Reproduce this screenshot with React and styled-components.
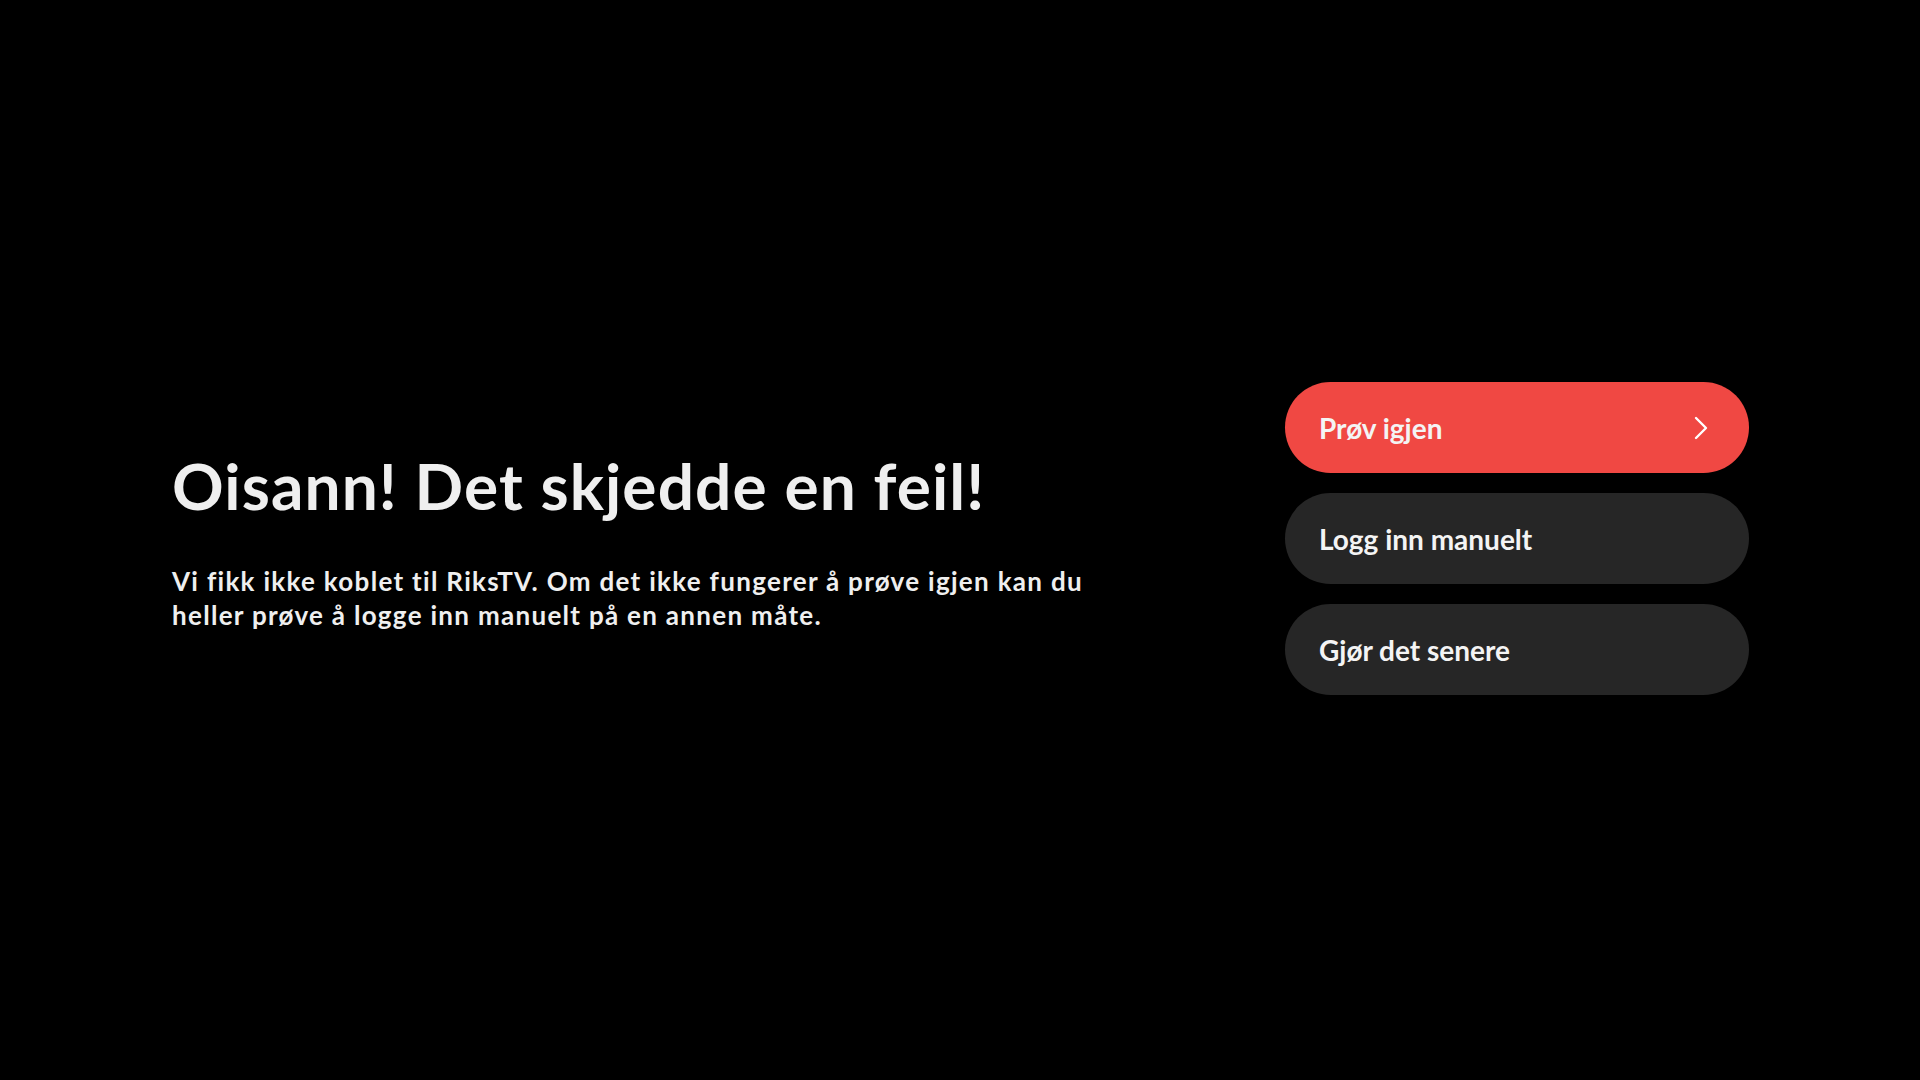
import React from 'react';
import styled, { createGlobalStyle } from 'styled-components';

const GlobalStyle = createGlobalStyle`
  html, body {
    margin: 0;
    padding: 0;
    background: #000;
  }
  body {
    font-family: Lato, "Noto Sans", sans-serif;
    color: #efefef;
  }
`;

const Screen = styled.main`
  width: 100vw;
  height: 100vh;
  box-sizing: border-box;
  padding: 0 171px 0 172px;
  display: flex;
  align-items: center;
  justify-content: space-between;
  background: #000;
`;

const TextColumn = styled.section`
  display: flex;
  flex-direction: column;
  gap: 40px;
`;

const Title = styled.h1`
  margin: 0;
  font-size: 64px;
  line-height: 76px;
  font-weight: 700;
  letter-spacing: 1.1px;
  color: #efefef;
`;

const Message = styled.p`
  margin: 0;
  font-size: 26px;
  line-height: 34px;
  font-weight: 700;
  letter-spacing: 1.3px;
  color: #efefef;
  max-width: 940px;
`;

const Actions = styled.nav`
  width: 464px;
  display: flex;
  flex-direction: column;
  gap: 20px;
  margin-bottom: 3px;
`;

const ActionButton = styled.button`
  height: 91px;
  border: none;
  border-radius: 46px;
  padding: 0 41px 0 34px;
  display: flex;
  align-items: center;
  justify-content: space-between;
  background: ${(p) => (p.$primary ? '#f04843' : '#262626')};
  color: #f4f4f4;
  font-family: Lato, "Noto Sans", sans-serif;
  font-size: 28px;
  font-weight: 700;
  cursor: pointer;
  text-align: left;
`;

const Chevron = () => (
  <svg width="14" height="24" viewBox="0 0 14 24" fill="none">
    <path d="M2 2 L12 12 L2 22" stroke="#fff" strokeWidth="2.4" strokeLinecap="round" strokeLinejoin="round" />
  </svg>
);

const App = () => {
  return (
    <>
      <GlobalStyle />
      <Screen>
        <TextColumn>
          <Title>Oisann! Det skjedde en feil!</Title>
          <Message>
            Vi fikk ikke koblet til RiksTV. Om det ikke fungerer å prøve igjen kan du heller prøve å logge inn manuelt på en annen måte.
          </Message>
        </TextColumn>
        <Actions>
          <ActionButton $primary>
            Prøv igjen
            <Chevron />
          </ActionButton>
          <ActionButton>Logg inn manuelt</ActionButton>
          <ActionButton>Gjør det senere</ActionButton>
        </Actions>
      </Screen>
    </>
  );
};

export default App;
